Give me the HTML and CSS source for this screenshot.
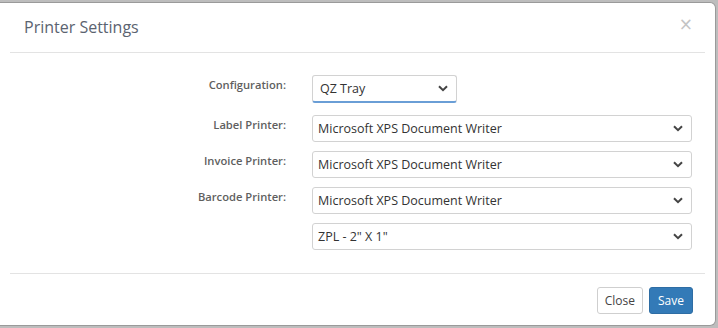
FILE: index.html
```html
<!DOCTYPE html>
<html lang="en">
<head>
  <meta charset="UTF-8" />
  <title>Printer Settings</title>
  <link rel="stylesheet" href="styles.css">
</head>
<body>
  <div class="backdrop-top">
    <span class="behind-text">Search Orders</span>
  </div>

  <div class="modal" role="dialog" aria-label="Printer Settings">
    <div class="modal-header">
      <h4 class="modal-title">Printer Settings</h4>
      <span class="fechar" aria-label="Close">&times;</span>
    </div>

    <div class="modal-body">
      <div class="linha linha-config">
        <label class="rotulo">Configuration:</label>
        <div class="campo">
          <div class="seletor seletor-curto">
            <span>QZ Tray</span>
            <svg class="seta" width="10" height="7" viewBox="0 0 10 7"><path d="M1 1.2 L5 5.2 L9 1.2" fill="none" stroke="#444" stroke-width="2"/></svg>
          </div>
        </div>
      </div>

      <div class="linha">
        <label class="rotulo">Label Printer:</label>
        <div class="campo">
          <div class="seletor">
            <span>Microsoft XPS Document Writer</span>
            <svg class="seta" width="10" height="7" viewBox="0 0 10 7"><path d="M1 1.2 L5 5.2 L9 1.2" fill="none" stroke="#444" stroke-width="2"/></svg>
          </div>
        </div>
      </div>

      <div class="linha">
        <label class="rotulo">Invoice Printer:</label>
        <div class="campo">
          <div class="seletor">
            <span>Microsoft XPS Document Writer</span>
            <svg class="seta" width="10" height="7" viewBox="0 0 10 7"><path d="M1 1.2 L5 5.2 L9 1.2" fill="none" stroke="#444" stroke-width="2"/></svg>
          </div>
        </div>
      </div>

      <div class="linha">
        <label class="rotulo">Barcode Printer:</label>
        <div class="campo">
          <div class="seletor">
            <span>Microsoft XPS Document Writer</span>
            <svg class="seta" width="10" height="7" viewBox="0 0 10 7"><path d="M1 1.2 L5 5.2 L9 1.2" fill="none" stroke="#444" stroke-width="2"/></svg>
          </div>
        </div>
      </div>

      <div class="linha">
        <span class="rotulo"></span>
        <div class="campo">
          <div class="seletor">
            <span>ZPL - 2" X 1"</span>
            <svg class="seta" width="10" height="7" viewBox="0 0 10 7"><path d="M1 1.2 L5 5.2 L9 1.2" fill="none" stroke="#444" stroke-width="2"/></svg>
          </div>
        </div>
      </div>
    </div>

    <div class="modal-footer">
      <button class="botao botao-fechar">Close</button>
      <button class="botao botao-salvar">Save</button>
    </div>
  </div>
</body>
</html>
```

FILE: styles.css
```css
* {
  margin: 0; padding: 0; box-sizing: border-box;
}
body {
  background: #bdbdbd;
  font-family: 'Open Sans', 'Liberation Sans', sans-serif;
  color: #333;
  width: 718px;
  height: 328px;
  overflow: hidden;
}

.backdrop-top {
  height: 2px;
  overflow: hidden;
  position: relative;
}

.behind-text {
  position: absolute;
  left: 184px;
  top: -11px;
  font-size: 13px;
  line-height: 13px;
  color: #888;
}

.modal {
  width: 716px;
  height: 324px;
  background: #fff;
  border: 1px solid #9a9a9a;
  border-left: none;
  border-radius: 0 6px 6px 0;
  display: flex;
  flex-direction: column;
}

.modal-header {
  display: flex;
  align-items: center;
  justify-content: space-between;
  height: 50px;
  margin: 0 10px;
  padding: 0 12px 0 14px;
  border-bottom: 1px solid #e3e3e3;
}

.modal-title {
  font-size: 16px;
  font-weight: 400;
  color: #5b6370;
  margin-top: -2px;
}

.fechar {
  font-family: 'DejaVu Sans', sans-serif;
  font-size: 17px;
  color: #c4c4c4;
  line-height: 1;
  margin-top: -7px;
}

.modal-body {
  padding-top: 22px;
  height: 220px;
}

.linha {
  display: grid;
  grid-template-columns: 286px 380px;
  column-gap: 26px;
  margin-bottom: 9px;
}

.linha-config {
  margin-bottom: 12px;
}

.rotulo {
  text-align: right;
  font-size: 11.2px;
  font-weight: 600;
  color: #5f5f5f;
  padding-top: 2px;
}

.seletor {
  height: 27px;
  border: 1px solid #d2d2d2;
  border-radius: 3px;
  display: flex;
  align-items: center;
  justify-content: space-between;
  padding: 0 8px 0 5px;
  font-size: 12.5px;
  color: #333;
}

.seletor-curto {
  width: 145px;
  height: 28px;
  border-bottom: 2px solid #6a9ed6;
  padding-left: 7px;
}

.seta {
  display: block;
}

.modal-footer {
  margin: 0 10px;
  border-top: 1px solid #e3e3e3;
  display: flex;
  justify-content: flex-end;
  gap: 6px;
  padding: 13px 12px 0 0;
}

.botao {
  font-family: 'Open Sans', 'Liberation Sans', sans-serif;
  font-size: 12px;
  height: 27px;
  border-radius: 3px;
  padding: 0 8px;
  cursor: pointer;
}

.botao-fechar {
  background: #fff;
  border: 1px solid #cfcfcf;
  color: #444;
  padding: 0 7px;
}

.botao-salvar {
  background: #337ab7;
  border: 1px solid #2e6da4;
  color: #fff;
  padding: 0 8px;
}
```
